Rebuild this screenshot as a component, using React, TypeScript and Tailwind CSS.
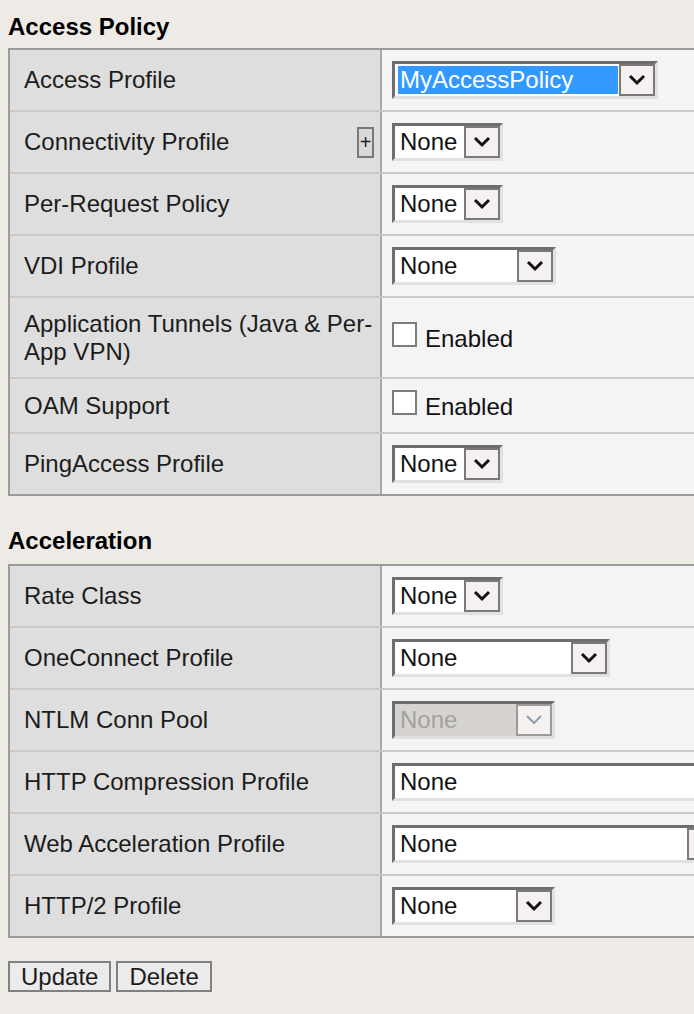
import React from 'react';

function Chevron({ disabled }: { disabled?: boolean }) {
  return (
    <svg width="18" height="12" viewBox="0 0 18 12">
      <polyline
        points="2,2 9,9 16,2"
        fill="none"
        stroke={disabled ? '#8e9baa' : '#111111'}
        strokeWidth={disabled ? 2 : 3}
      />
    </svg>
  );
}

interface SelectProps {
  value: string;
  widthClass: string;
  highlight?: boolean;
  disabled?: boolean;
}

function Select({ value, widthClass, highlight, disabled }: SelectProps) {
  return (
    <div
      className={`flex h-[38px] shrink-0 border-[3px] border-t-[#6e6e6e] border-l-[#6e6e6e] border-r-[#e3e0e0] border-b-[#e3e0e0] ${
        disabled ? 'bg-[#d7d4d0]' : 'bg-white'
      } ${widthClass}`}
    >
      {highlight ? (
        <div className="my-[2px] ml-[3px] mr-[1px] flex flex-1 items-center bg-[#3399ff] pl-[2px] text-white">
          {value}
        </div>
      ) : (
        <div
          className={`flex flex-1 items-center pl-[5px] ${
            disabled ? 'text-[#a2a2a2]' : 'text-[#111]'
          }`}
        >
          {value}
        </div>
      )}
      <div
        className={`flex h-full w-[36px] shrink-0 items-center justify-center border-2 bg-[#f5f1f1] ${
          disabled ? 'border-[#9a9a9a]' : 'border-[#7a7a7a]'
        }`}
      >
        <Chevron disabled={disabled} />
      </div>
    </div>
  );
}

function Checkbox() {
  return (
    <div className="leading-[28px] text-[#111]">
      <span className="mr-[8px] inline-block h-[25px] w-[25px] border-2 border-[#7d7d7d] bg-white align-baseline" />
      Enabled
    </div>
  );
}

function PlusBox() {
  return (
    <span className="flex h-[31px] w-[17px] shrink-0 items-center justify-center border-2 border-[#787878] bg-[#d9d9d9] text-[20px] leading-none text-[#222]">
      +
    </span>
  );
}

interface RowProps {
  label: string;
  plus?: boolean;
  last?: boolean;
  children: React.ReactNode;
}

function Row({ label, plus, last, children }: RowProps) {
  return (
    <div className={`flex ${last ? '' : 'border-b-2 border-[#cbc8c5]'}`}>
      <div className="flex w-[372px] shrink-0 items-center justify-between border-r-2 border-[#a9a9a9] bg-[#dedede] py-[12px] pl-[14px] pr-[6px] leading-[27.5px] text-[#1c1c1c]">
        <span>{label}</span>
        {plus && <PlusBox />}
      </div>
      <div className="flex flex-1 items-center bg-[#f4f4f4] py-[11px] pl-[10px]">{children}</div>
    </div>
  );
}

export default function App() {
  return (
    <div className="min-h-screen w-full overflow-hidden bg-[#eeebe7] px-[8px] pt-[13px] font-['Liberation_Sans',Arial,sans-serif] text-[24px]">
      <h2 className="mb-[7px] font-bold leading-[28px] text-black">Access Policy</h2>
      <div className="w-[760px] border-2 border-[#9b9b9b]">
        <Row label="Access Profile">
          <Select value="MyAccessPolicy" widthClass="w-[266px]" highlight />
        </Row>
        <Row label="Connectivity Profile" plus>
          <Select value="None" widthClass="w-[111px]" />
        </Row>
        <Row label="Per-Request Policy">
          <Select value="None" widthClass="w-[111px]" />
        </Row>
        <Row label="VDI Profile">
          <Select value="None" widthClass="w-[164px]" />
        </Row>
        <Row label="Application Tunnels (Java & Per-App VPN)">
          <Checkbox />
        </Row>
        <Row label="OAM Support">
          <Checkbox />
        </Row>
        <Row label="PingAccess Profile" last>
          <Select value="None" widthClass="w-[111px]" />
        </Row>
      </div>

      <h2 className="mb-[9px] mt-[31px] font-bold leading-[28px] text-black">Acceleration</h2>
      <div className="w-[760px] border-2 border-[#9b9b9b]">
        <Row label="Rate Class">
          <Select value="None" widthClass="w-[111px]" />
        </Row>
        <Row label="OneConnect Profile">
          <Select value="None" widthClass="w-[218px]" />
        </Row>
        <Row label="NTLM Conn Pool">
          <Select value="None" widthClass="w-[163px]" disabled />
        </Row>
        <Row label="HTTP Compression Profile">
          <Select value="None" widthClass="w-[400px]" />
        </Row>
        <Row label="Web Acceleration Profile">
          <Select value="None" widthClass="w-[334px]" />
        </Row>
        <Row label="HTTP/2 Profile" last>
          <Select value="None" widthClass="w-[163px]" />
        </Row>
      </div>

      <div className="mt-[23px] flex gap-[5px]">
        <button className="flex h-[31px] items-center border-2 border-[#808080] bg-[#ebebeb] px-[11px] text-[24px] leading-none text-[#1c1c1c]">
          Update
        </button>
        <button className="flex h-[31px] items-center border-2 border-[#808080] bg-[#ebebeb] px-[11px] text-[24px] leading-none text-[#1c1c1c]">
          Delete
        </button>
      </div>
    </div>
  );
}
